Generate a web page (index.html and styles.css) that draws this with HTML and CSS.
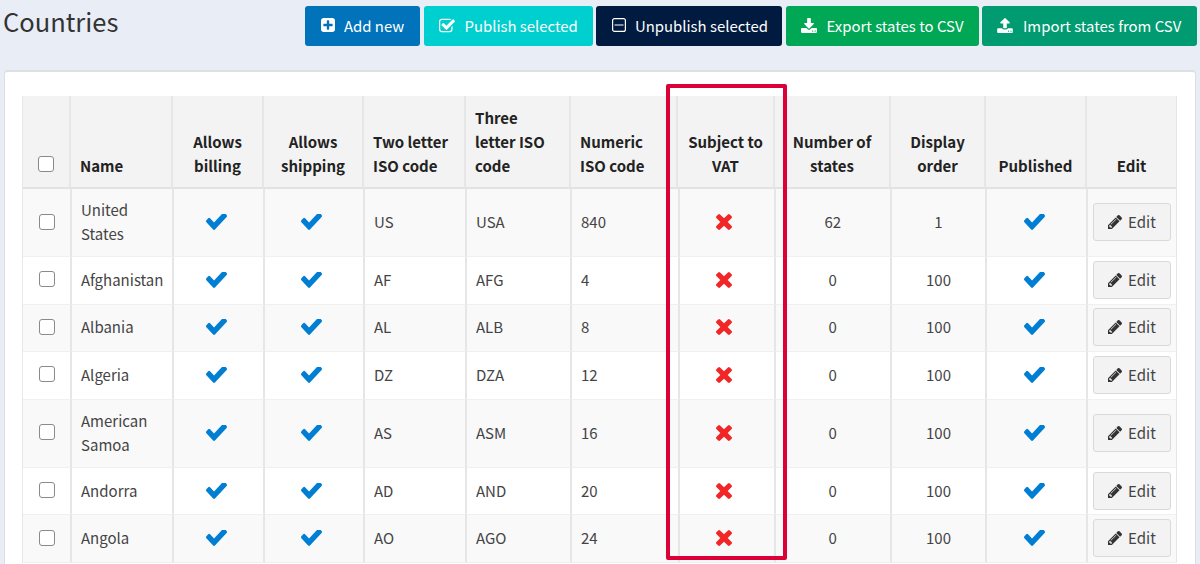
FILE: index.html
```html
<!DOCTYPE html>
<html lang="en">
<head>
<meta charset="utf-8">
<title>Countries</title>
<link rel="stylesheet" href="styles.css">
</head>
<body>
<svg class="sprite" aria-hidden="true">
<symbol id="check" viewBox="121 434 1550 1088" preserveAspectRatio="none"><path d="M1671 566q0 40-28 68l-724 724-136 136q-28 28-68 28t-68-28l-136-136-362-362q-28-28-28-68t28-68l136-136q28-28 68-28t68 28l294 295 656-657q28-28 68-28t68 28l136 136q28 28 28 68z"/></symbol>
<symbol id="times" viewBox="302 366 1188 1188"><path d="M1490 1322q0 40-28 68l-136 136q-28 28-68 28t-68-28l-294-294-294 294q-28 28-68 28t-68-28l-136-136q-28-28-28-68t28-68l294-294-294-294q-28-28-28-68t28-68l136-136q28-28 68-28t68 28l294 294 294-294q28-28 68-28t68 28l136 136q28 28 28 68t-28 68l-294 294 294 294q28 28 28 68z"/></symbol>
<symbol id="pencil" viewBox="128 149 1515 1515"><path d="M491 1536l91-91-235-235-91 91v107h128v128h107zm523-928q0-22-22-22-10 0-17 7l-542 542q-7 7-7 17 0 22 22 22 10 0 17-7l542-542q7-7 7-17zm-54-192l416 416-832 832h-416v-416zm683 96q0 53-37 90l-166 166-416-416 166-165q36-38 90-38 53 0 91 38l235 234q37 39 37 91z"/></symbol>
<symbol id="plus" viewBox="128 128 1536 1536"><path d="M1408 960v-128q0-26-19-45t-45-19h-320v-320q0-26-19-45t-45-19h-128q-26 0-45 19t-19 45v320h-320q-26 0-45 19t-19 45v128q0 26 19 45t45 19h320v320q0 26 19 45t45 19h128q26 0 45-19t19-45v-320h320q26 0 45-19t19-45zm256-544v960q0 119-84.5 203.5t-203.5 84.5h-960q-119 0-203.5-84.5t-84.5-203.5v-960q0-119 84.5-203.5t203.5-84.5h960q119 0 203.5 84.5t84.5 203.5z"/></symbol>
<symbol id="publish" viewBox="63 128 1664 1408"><path d="M1472 930v318q0 119-84.5 203.5t-203.5 84.5h-832q-119 0-203.5-84.5t-84.5-203.5v-832q0-119 84.5-203.5t203.5-84.5h832q63 0 117 25 15 7 18 23 3 17-9 29l-49 49q-10 10-23 10-3 0-9-2-23-6-45-6h-832q-66 0-113 47t-47 113v832q0 66 47 113t113 47h832q66 0 113-47t47-113v-254q0-13 9-22l64-64q10-10 23-10 6 0 12 3 20 8 20 29zm231-489l-814 814q-24 24-57 24t-57-24l-430-430q-24-24-24-57t24-57l110-110q24-24 57-24t57 24l263 263 647-647q24-24 57-24t57 24l110 110q24 24 24 57t-24 57z"/></symbol>
<symbol id="minus" viewBox="0 0 14 14"><path fill="none" stroke="currentColor" stroke-width="1.2" d="M2.6.6h8.8a2 2 0 0 1 2 2v8.8a2 2 0 0 1-2 2H2.600a2 2 0 0 1-2-2V2.600a2 2 0 0 1 2-2zM2.500 7h9"/></symbol>
<symbol id="download" viewBox="64 0 1664 1536"><path d="M1344 1344q0-26-19-45t-45-19-45 19-19 45 19 45 45 19 45-19 19-45zm256 0q0-26-19-45t-45-19-45 19-19 45 19 45 45 19 45-19 19-45zm128-224v320q0 40-28 68t-68 28h-1472q-40 0-68-28t-28-68v-320q0-40 28-68t68-28h465l135 136q58 56 136 56t136-56l136-136h464q40 0 68 28t28 68zm-325-569q17 41-14 70l-448 448q-18 19-45 19t-45-19l-448-448q-31-29-14-70 17-39 59-39h256v-448q0-26 19-45t45-19h256q26 0 45 19t19 45v448h256q42 0 59 39z"/></symbol>
<symbol id="upload" viewBox="64 64 1664 1600"><path d="M1344 1472q0-26-19-45t-45-19-45 19-19 45 19 45 45 19 45-19 19-45zm256 0q0-26-19-45t-45-19-45 19-19 45 19 45 45 19 45-19 19-45zm128-224v320q0 40-28 68t-68 28h-1472q-40 0-68-28t-28-68v-320q0-40 28-68t68-28h427q21 56 70.500 92t110.500 36h256q61 0 110.500-36t70.500-92h427q40 0 68 28t28 68zm-325-648q-17 40-59 40h-256v448q0 26-19 45t-45 19h-256q-26 0-45-19t-19-45v-448h-256q-42 0-59-40-17-39 14-70l448-448q18-19 45-19t45 19l448 448q31 31 14 70z"/></symbol>
</svg>
<header class="topbar">
<h1>Countries</h1>
<div class="actions">
<button class="btn add"><svg class="i14"><use href="#plus"/></svg>Add new</button>
<button class="btn publish"><svg class="i16"><use href="#publish"/></svg>Publish selected</button>
<button class="btn unpublish"><svg class="i14"><use href="#minus"/></svg>Unpublish selected</button>
<button class="btn export"><svg class="i16"><use href="#download"/></svg>Export states to CSV</button>
<button class="btn import"><svg class="i16"><use href="#upload"/></svg>Import states from CSV</button>
</div>
</header>
<main class="card">
<div class="row head">
<div class="c"><input type="checkbox"></div><div>Name</div><div class="c">Allows<br>billing</div><div class="c">Allows<br>shipping</div><div>Two letter<br>ISO code</div><div>Three<br>letter ISO<br>code</div><div>Numeric<br>ISO code</div><div class="c">Subject to<br>VAT</div><div class="c">Number of<br>states</div><div class="c">Display<br>order</div><div class="c">Published</div><div class="c">Edit</div>
</div>
<div class="row tall"><div class="c"><input type="checkbox"></div><div>United<br>States</div><div class="mark"><svg class="check"><use href="#check"/></svg></div><div class="mark"><svg class="check"><use href="#check"/></svg></div><div>US</div><div>USA</div><div>840</div><div class="mark"><svg class="times"><use href="#times"/></svg></div><div class="c">62</div><div class="c">1</div><div class="mark"><svg class="check"><use href="#check"/></svg></div><div class="c"><button class="edit"><svg><use href="#pencil"/></svg>Edit</button></div></div>
<div class="row"><div class="c"><input type="checkbox"></div><div>Afghanistan</div><div class="mark"><svg class="check"><use href="#check"/></svg></div><div class="mark"><svg class="check"><use href="#check"/></svg></div><div>AF</div><div>AFG</div><div>4</div><div class="mark"><svg class="times"><use href="#times"/></svg></div><div class="c">0</div><div class="c">100</div><div class="mark"><svg class="check"><use href="#check"/></svg></div><div class="c"><button class="edit"><svg><use href="#pencil"/></svg>Edit</button></div></div>
<div class="row"><div class="c"><input type="checkbox"></div><div>Albania</div><div class="mark"><svg class="check"><use href="#check"/></svg></div><div class="mark"><svg class="check"><use href="#check"/></svg></div><div>AL</div><div>ALB</div><div>8</div><div class="mark"><svg class="times"><use href="#times"/></svg></div><div class="c">0</div><div class="c">100</div><div class="mark"><svg class="check"><use href="#check"/></svg></div><div class="c"><button class="edit"><svg><use href="#pencil"/></svg>Edit</button></div></div>
<div class="row"><div class="c"><input type="checkbox"></div><div>Algeria</div><div class="mark"><svg class="check"><use href="#check"/></svg></div><div class="mark"><svg class="check"><use href="#check"/></svg></div><div>DZ</div><div>DZA</div><div>12</div><div class="mark"><svg class="times"><use href="#times"/></svg></div><div class="c">0</div><div class="c">100</div><div class="mark"><svg class="check"><use href="#check"/></svg></div><div class="c"><button class="edit"><svg><use href="#pencil"/></svg>Edit</button></div></div>
<div class="row tall"><div class="c"><input type="checkbox"></div><div>American<br>Samoa</div><div class="mark"><svg class="check"><use href="#check"/></svg></div><div class="mark"><svg class="check"><use href="#check"/></svg></div><div>AS</div><div>ASM</div><div>16</div><div class="mark"><svg class="times"><use href="#times"/></svg></div><div class="c">0</div><div class="c">100</div><div class="mark"><svg class="check"><use href="#check"/></svg></div><div class="c"><button class="edit"><svg><use href="#pencil"/></svg>Edit</button></div></div>
<div class="row"><div class="c"><input type="checkbox"></div><div>Andorra</div><div class="mark"><svg class="check"><use href="#check"/></svg></div><div class="mark"><svg class="check"><use href="#check"/></svg></div><div>AD</div><div>AND</div><div>20</div><div class="mark"><svg class="times"><use href="#times"/></svg></div><div class="c">0</div><div class="c">100</div><div class="mark"><svg class="check"><use href="#check"/></svg></div><div class="c"><button class="edit"><svg><use href="#pencil"/></svg>Edit</button></div></div>
<div class="row"><div class="c"><input type="checkbox"></div><div>Angola</div><div class="mark"><svg class="check"><use href="#check"/></svg></div><div class="mark"><svg class="check"><use href="#check"/></svg></div><div>AO</div><div>AGO</div><div>24</div><div class="mark"><svg class="times"><use href="#times"/></svg></div><div class="c">0</div><div class="c">100</div><div class="mark"><svg class="check"><use href="#check"/></svg></div><div class="c"><button class="edit"><svg><use href="#pencil"/></svg>Edit</button></div></div>
</main>
<div class="highlight"></div>
</body>
</html>
```
FILE: styles.css
```css
* { box-sizing: border-box; }
html, body { height: 564px; overflow: hidden; }
body {
  margin: 0;
  background: #e9edf6;
  color: #444;
  font-family: "Source Sans Pro", "Noto Sans CJK SC", "Noto Sans", sans-serif;
  font-size: 15px;
  line-height: 24px;
}
.sprite { display: none; }
svg { fill: currentColor; flex: none; }
button { font: inherit; margin: 0; }
.topbar { display: flex; justify-content: space-between; height: 70px; padding: 6px 3px 0 3px; }
h1 { margin: 0; font-size: 25.500px; font-weight: 400; line-height: 30px; color: #333; }
.actions { display: flex; gap: 3.500px; height: 40px; }
.btn {
  display: flex; align-items: center; gap: 9px;
  border: 0; border-radius: 3px; padding: 0 0 0 16px;
  color: #fff; white-space: nowrap; font-size: 14.900px;
}
.add { width: 115px; background: #0073bb; }
.publish { width: 169px; background: #00cfcf; padding-left: 15px; }
.unpublish { width: 186px; background: #001a40; }
.export { width: 193px; background: #00a855; padding-left: 15px; }
.import { width: 215px; background: #009b70; }
.i14 { width: 14px; height: 14px; margin-top: -2px; }
.i16 { width: 16px; height: 15px; margin-top: -2px; }
.import, .export, .publish { gap: 10px; }
.import { padding-left: 15px; }
.card {
  height: 494px; margin: 0 4px; padding: 24px 17px 0;
  background: #fff; border: 1px solid #dcdee2; border-top: 2px solid #dedfe1; border-bottom: 0;
  border-radius: 4px 4px 0 0; overflow: hidden;
}
.row {
  display: grid; height: 47.600px;
  grid-template-columns: 49px 102px 91px 100px 102px 105px 107.500px 96px 116.500px 95px 101px 89px;
  border-left: 1px solid #e8e8e8;
  width: 1155px;
}
.row > div {
  display: flex; align-items: center;
  padding: 0 0 1px 9px;
  border-right: 2px solid #e6e6e6; border-bottom: 1px solid #f0f0f0;
}
.row > div:last-child { border-right-width: 1px; }
.tall { height: 68px; }
.row:nth-child(even) { background: #f9f9f9; }
.row > .c { justify-content: center; text-align: center; padding: 0 0 1px; }
.row > .mark { justify-content: center; padding: 0 5px 1px 0; }
.head {
  height: 93px; background: #f3f3f3; color: #222; font-weight: 700;
  grid-template-columns: 48px 102px 91px 100px 102px 105px 107px 97px 116px 95px 101px 90px;
}
.head > div, .row.head > .c { align-items: flex-end; padding-bottom: 9px; border-bottom: 2px solid #e2e2e2; }
.check { width: 21px; height: 16px; color: #007ed3; }
.times { width: 16px; height: 16px; color: #f22626; }
input {
  appearance: none; width: 16px; height: 16px; margin: 0 0 1px;
  border: 1px solid #8a8a8a; border-radius: 3px; background: #fff;
}
.head input { margin: 0 0 6px; }
.edit {
  display: flex; align-items: center; justify-content: center; gap: 6px;
  width: 78px; height: 38px; padding: 0;
  border: 1px solid #d9d9d9; border-radius: 3px; background: #f3f3f3; color: #444;
}
.edit svg { width: 14px; height: 14px; color: #333; }
.highlight {
  position: absolute; left: 666px; top: 84px; width: 121px; height: 476px;
  border: 4px solid #db0038; border-radius: 2px;
}
```
